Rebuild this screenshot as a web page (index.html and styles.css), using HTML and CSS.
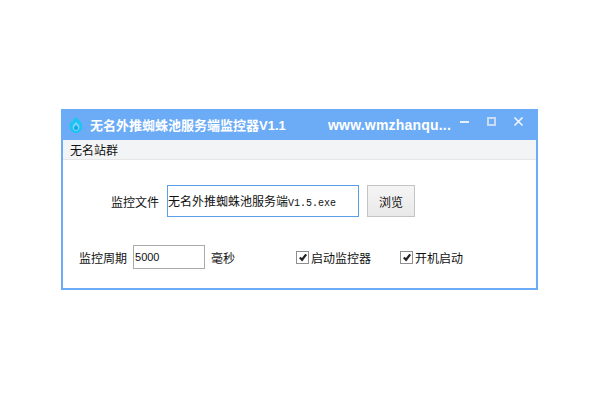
FILE: index.html
```html
<!DOCTYPE html>
<html lang="zh-CN">
<head>
    <meta charset="UTF-8">
    <title>无名外推蜘蛛池服务端监控器V1.1</title>
    <link rel="stylesheet" href="styles.css">
</head>
<body>

    <div class="window">
        <div class="titlebar">
            <svg class="logo" width="16" height="18" viewBox="0 0 16 18">
                <path d="M7 1c2 2 6 4 7 8 1 5-3 8-6 8s-7-3-6.500-8c.2-1.500 1-3 2-4 0 1.500.5 2 1 2.500C4.500 5 6 3 7 1z" fill="#17c6f2"/>
                <path d="M8 6c2 1.500 3.500 3 3.500 5 0 2-1.700 4-3.500 4s-3.500-2-3.500-4c0-2 2-3 3.500-5z" fill="#7fd0f8"/>
                <path d="M8 9c1.300 1 2 1.800 2 3s-1 2-2 2-2-.8-2-2 1-2 2-3z" fill="#12a6ee"/>
            </svg>
            <span class="title">无名外推蜘蛛池服务端监控器V1.1</span>
            <span class="site">www.wmzhanqu...</span>
            <div class="controls">
                <svg width="12" height="12" viewBox="0 0 12 12"><rect x="1" y="5" width="9" height="2" fill="#e6f1fe"/></svg>
                <svg width="12" height="12" viewBox="0 0 12 12"><rect x="2" y="2" width="7" height="7" fill="none" stroke="#c9dcf5" stroke-width="2"/></svg>
                <svg width="12" height="12" viewBox="0 0 12 12"><path d="M1.500 1.500l8 8M9.500 1.500l-8 8" stroke="#f2f7ff" stroke-width="1.600" fill="none"/></svg>
            </div>
        </div>

        <div class="menubar">无名站群</div>

        <div class="content">
            <div class="row row-file">
                <label class="label">监控文件</label>
                <div class="file-input">无名外推蜘蛛池服务端<span class="file-ext">V1.5.exe</span></div>
                <button class="browse">浏览</button>
            </div>
            <div class="row row-period">
                <label class="label">监控周期</label>
                <input class="period-input" type="text" value="5000">
                <span class="unit">毫秒</span>
                <span class="check check-monitor"><span class="box"><svg width="11" height="11" viewBox="0 0 11 11"><path d="M2 5.500l2.500 2.500 4.500-6" fill="none" stroke="#222" stroke-width="2.400"/></svg></span>启动监控器</span>
                <span class="check check-boot"><span class="box"><svg width="11" height="11" viewBox="0 0 11 11"><path d="M2 5.500l2.500 2.500 4.500-6" fill="none" stroke="#222" stroke-width="2.400"/></svg></span>开机启动</span>
            </div>
        </div>
    </div>

</body>
</html>
```

FILE: styles.css
```css
body { margin: 0; padding: 109px 0 0 61px; background: #fff; color: #111; font-family: "Noto Sans CJK SC", sans-serif; font-size: 12px; }
.window { width: 477px; height: 181px; box-sizing: border-box; border: 2px solid #6cacf6; border-top: none; background: #fff; }
.titlebar { display: flex; align-items: center; height: 31px; margin: 0 -2px; padding-left: 7px; background: #6cacf6; color: #fff; font-weight: bold; font-family: "Liberation Sans", "Noto Sans CJK SC", sans-serif; }
.logo { flex: none; margin-right: 6px; }
.title { width: 238px; font-size: 13px; white-space: nowrap; }
.site { font-size: 14px; letter-spacing: 0.2px; white-space: nowrap; }
.controls { display: flex; gap: 15px; margin-left: 8px; margin-top: -5px; }
.menubar { height: 20px; line-height: 20px; padding-left: 7px; background: #f3f4f6; border-bottom: 1px solid #e6e6e6; box-sizing: border-box; }
.content { padding-top: 25px; }
.row { display: flex; align-items: center; }
.row-file { height: 32px; padding-left: 48px; }
.row-period { height: 24px; margin-top: 28px; padding-left: 16px; }
.file-input { width: 192px; height: 32px; line-height: 30px; box-sizing: border-box; margin-left: 8px; border: 1px solid #5b9fe6; white-space: nowrap; overflow: hidden; }
.file-ext { font-family: "Liberation Mono", monospace; font-size: 10px; }
.browse { width: 48px; height: 32px; margin-left: 8px; padding: 0; border: 1px solid #c4c4c4; background: linear-gradient(#f5f5f5, #e9e9e9); color: #111; font: inherit; }
.period-input { width: 72px; height: 24px; box-sizing: border-box; margin-left: 6px; padding: 0 1px; border: 1px solid #aaa; outline: none; color: #111; font-family: "Liberation Sans", sans-serif; font-size: 11px; }
.unit { margin-left: 6px; }
.check { display: flex; align-items: center; }
.check-monitor { margin-left: 61px; }
.check-boot { margin-left: 29px; }
.box { display: flex; width: 13px; height: 13px; box-sizing: border-box; margin-right: 2px; padding: 0 0 0 1px; border: 1px solid #8e8e8e; background: #fff; }
```
